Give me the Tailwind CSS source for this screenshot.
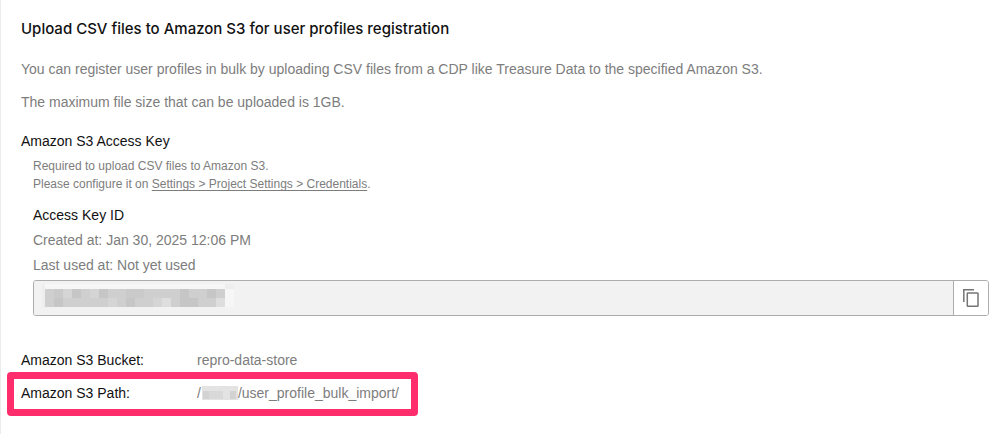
<!DOCTYPE html>
<html lang="en">
<head>
  <meta charset="UTF-8" />
  <meta name="viewport" content="width=device-width, initial-scale=1.0"/>
  <title>User profiles registration</title>
  <script src="https://cdn.jsdelivr.net/npm/@tailwindcss/browser@4"></script>
</head>
<body class="bg-white font-['Liberation_Sans',Arial,sans-serif] text-sm/5 text-[#7d7d7d]">

  <main class="min-h-screen border-l border-[#ececec] pl-5 pr-[13px] pt-[17px] pb-4">
    <h1 class="font-[Inter,sans-serif] text-[15px]/6 font-medium text-[#111]">Upload CSV files to Amazon S3 for user profiles registration</h1>
    <p class="mt-[18px]">You can register user profiles in bulk by uploading CSV files from a CDP like Treasure Data to the specified Amazon S3.</p>
    <p class="mt-[13px]">The maximum file size that can be uploaded is 1GB.</p>

    <!-- Access key -->
    <section class="mt-[19px]">
      <h2 class="text-[#111]">Amazon S3 Access Key</h2>
      <div class="pl-3">
        <p class="mt-[6px] text-xs/[18px]">
          Required to upload CSV files to Amazon S3.<br>
          Please configure it on <a href="#" class="underline underline-offset-2">Settings &gt; Project Settings &gt; Credentials</a>.
        </p>
        <label for="access-key" class="mt-3 block text-[#111]">Access Key ID</label>
        <p class="mt-[5px]">Created at: Jan 30, 2025 12:06 PM</p>
        <p class="mt-[5px]">Last used at: Not yet used</p>
        <div class="relative mt-[5px] flex h-9 rounded-[3px] border border-[#adadad]">
          <input id="access-key" type="text" readonly class="min-w-0 flex-1 rounded-l-[2px] bg-[#f2f2f2] px-3">
          <button type="button" aria-label="Copy" class="flex w-[35px] items-center justify-center rounded-r-[2px] border-l border-[#adadad] bg-white">
            <svg class="size-5" viewBox="0 0 20 20" fill="none" stroke="#757575" stroke-width="1.5">
              <path d="M2.8 14V1.8H13"/>
              <rect x="6.3" y="5" width="10.7" height="13.3" rx="0.6"/>
            </svg>
          </button>
          <!-- Masked key -->
          <svg class="pointer-events-none absolute left-2 top-[3px]" width="192" height="24" viewBox="0 0 192 24" shape-rendering="crispEdges" aria-hidden="true">
            <path fill="#f6f6f6" d="M3 0h180v5H3zM183 5h9v18h-9z"/>
            <path fill="#eeeeee" d="M0 0h3v24H0zM183 0h9v5h-9z"/>
            <path fill="#cfcfcf" d="M3 5h180v18H3z"/>
            <path fill="#c6c6c6" d="M30 5h9v9h-9zM57 5h9v9h-9zM138 5h9v9h-9zM165 5h9v9h-9zM12 14h9v9h-9zM84 14h9v9h-9zM138 14h18v9h-18z"/>
            <path fill="#cacaca" d="M12 5h9v9h-9zM84 5h18v9H84z"/>
            <path fill="#d5d5d5" d="M21 5h9v9h-9zM48 5h9v9h-9zM66 14h9v9h-9zM111 14h9v9h-9z"/>
            <path fill="#dedede" d="M120 14h9v9h-9zM174 14h9v9h-9z"/>
          </svg>
        </div>
      </div>
    </section>

    <!-- Bucket and path -->
    <dl class="mt-[34px] space-y-[13px]">
      <div class="flex">
        <dt class="w-44 text-[#111]">Amazon S3 Bucket:</dt>
        <dd>repro-data-store</dd>
      </div>
      <div class="relative flex">
        <dt class="w-44 text-[#111]">Amazon S3 Path:</dt>
        <dd class="flex items-center">/
          <svg class="ml-px" width="36" height="14" viewBox="0 0 36 14" shape-rendering="crispEdges" role="img" aria-label="masked">
            <path fill="#e3e3e3" d="M0 0h36v14H0z"/>
            <path fill="#d2d2d2" d="M1 5h6v8H1zM28 5h6v8h-6z"/>
            <path fill="#d9d9d9" d="M7 5h14v8H7z"/>
          </svg>/user_profile_bulk_import/</dd>
        <div class="pointer-events-none absolute -left-[14px] -top-[11px] h-11 w-[411px] rounded-[4px] border-[7px] border-[#ff2d6c]"></div>
      </div>
    </dl>
  </main>

</body>
</html>
